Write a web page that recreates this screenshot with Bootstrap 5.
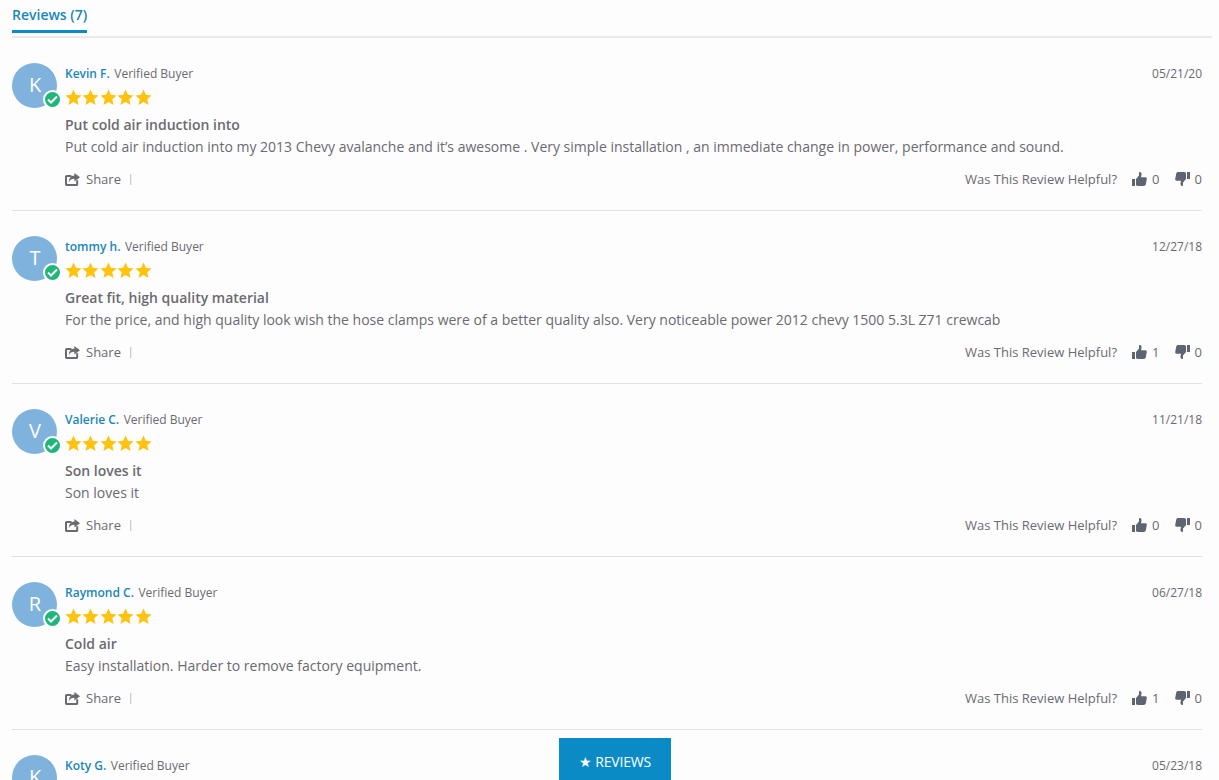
<!DOCTYPE html>
<html lang="en"><head><meta charset="utf-8"><title>Reviews</title>
<link href="https://cdn.jsdelivr.net/npm/bootstrap@5.3.0/dist/css/bootstrap.min.css" rel="stylesheet">
<style>
html,body{height:780px;overflow:hidden}
body{background:#fdfdfd;font-family:"Open Sans",sans-serif;color:#6a6a71;font-size:14px}
.rv-wrap{padding:0 17px 0 12px}
.rv-tabs{height:38px;border-bottom:2px solid #e9e9e9;margin-right:-10px}
.rv-tab{display:inline-block;height:33px;line-height:30px;font-size:14px;font-weight:600;color:#1a87b9;border-bottom:3px solid #0a8bc6}
.rv-item{height:173px;border-bottom:1px solid #e2e2e2;padding-top:25px}
.rv-avatar{width:45px;height:45px;border-radius:50%;background:#7fb2dc;color:#fff;font-size:20px;line-height:44px;text-align:center;position:relative;flex:none;margin-right:8px;padding-left:1px}
.rv-check{position:absolute;right:-5px;bottom:-1px;width:19px;height:19px;border-radius:50%;background:#1fb67b;border:2px solid #fff;display:flex;align-items:center;justify-content:center}
.rv-head{font-size:12px;line-height:22px;height:22px}
.rv-name{color:#1a87b9;font-weight:600;margin-right:4.5px}
.rv-date{font-size:12px;line-height:22px}
.rv-stars{height:26px;margin-top:-1px;display:flex;gap:.4px;align-items:center}
.rv-title{font-weight:600;font-size:14px;line-height:22px;margin-top:4px}
.rv-body{font-size:14px;line-height:22px}
.rv-foot{font-size:13px;line-height:20px;margin-top:11px}
.rv-share-ico{margin-right:6px}
.rv-sep{font-size:10px;margin-left:7px;position:relative;top:-1px;font-weight:300}
.rv-thumb{margin-left:15px}
.rv-thumb-down{transform:scale(-1,-1)}
.rv-count{width:7.5px;display:inline-block;margin-left:5px}
.rv-float{position:fixed;left:559px;bottom:0;width:112px;height:42px;background:#0a8bc6;color:#fff;font-size:14px;line-height:47px;text-align:center;letter-spacing:-.2px}
</style></head>
<body>
<svg width="0" height="0" class="d-block position-absolute">
<defs>
<path id="rv-star" d="M8.5.5l2.4 5.3 5.6.6-4.2 3.9 1.2 5.7-5-2.9-5 2.9 1.2-5.7L.5 6.4l5.6-.6z" fill="#fdc30f"/>
<path id="rv-up" d="M0 7h3v7H0zM4 7l3-3.5V0.6C7 .2 7.4 0 7.8 0 9 0 9.8 1.3 9.5 2.8L9 5.2h4.4c.9 0 1.6.8 1.4 1.7l-1 5.4c-.2 1-1 1.7-2 1.7H6.2c-.8 0-1.5-.3-2.2-.8z" fill="#5f6472"/>
<path id="rv-share" d="M13.2 7.2V11.2c0 1-.8 1.8-1.8 1.8H1.8C.8 13 0 12.2 0 11.2V3.8C0 2.8.8 2 1.8 2H6.4v2H2v7h9.2V7.2zM9.4 0L15 4.2 9.4 8.4V5.8C6.8 5.8 5 6.8 3.8 9.2c0-4 2.2-6.4 5.6-6.6z" fill="#6a6a71"/>
</defs></svg>
<div class="rv-wrap">
<div class="rv-tabs"><span class="rv-tab">Reviews (7)</span></div>

<div class="rv-item d-flex"><div class="rv-avatar">K<span class="rv-check"><svg width="11" height="9" viewBox="0 0 11 9"><path d="M1 4.5l3 3 6-6" fill="none" stroke="#fff" stroke-width="2"/></svg></span></div>
<div class="flex-grow-1">
<div class="d-flex justify-content-between"><div class="rv-head"><span class="rv-name">Kevin F.</span>Verified Buyer</div><div class="rv-date">05/21/20</div></div>
<div class="rv-stars"><svg width="17" height="17"><use href="#rv-star"/></svg><svg width="17" height="17"><use href="#rv-star"/></svg><svg width="17" height="17"><use href="#rv-star"/></svg><svg width="17" height="17"><use href="#rv-star"/></svg><svg width="17" height="17"><use href="#rv-star"/></svg></div>
<div class="rv-title">Put cold air induction into</div>
<div class="rv-body">Put cold air induction into my 2013 Chevy avalanche and it’s awesome . Very simple installation , an immediate change in power, performance and sound.</div>
<div class="rv-foot d-flex justify-content-between align-items-center"><div class="d-flex align-items-center"><svg width="15" height="13" class="rv-share-ico"><use href="#rv-share"/></svg>Share<span class="rv-sep">|</span></div><div class="d-flex align-items-center">Was This Review Helpful?<svg width="15" height="14" class="rv-thumb"><use href="#rv-up"/></svg><span class="rv-count">0</span><svg width="15" height="14" class="rv-thumb rv-thumb-down"><use href="#rv-up"/></svg><span class="rv-count">0</span></div></div>
</div></div>

<div class="rv-item d-flex"><div class="rv-avatar">T<span class="rv-check"><svg width="11" height="9" viewBox="0 0 11 9"><path d="M1 4.5l3 3 6-6" fill="none" stroke="#fff" stroke-width="2"/></svg></span></div>
<div class="flex-grow-1">
<div class="d-flex justify-content-between"><div class="rv-head"><span class="rv-name">tommy h.</span>Verified Buyer</div><div class="rv-date">12/27/18</div></div>
<div class="rv-stars"><svg width="17" height="17"><use href="#rv-star"/></svg><svg width="17" height="17"><use href="#rv-star"/></svg><svg width="17" height="17"><use href="#rv-star"/></svg><svg width="17" height="17"><use href="#rv-star"/></svg><svg width="17" height="17"><use href="#rv-star"/></svg></div>
<div class="rv-title">Great fit, high quality material</div>
<div class="rv-body">For the price, and high quality look wish the hose clamps were of a better quality also. Very noticeable power 2012 chevy 1500 5.3L Z71 crewcab</div>
<div class="rv-foot d-flex justify-content-between align-items-center"><div class="d-flex align-items-center"><svg width="15" height="13" class="rv-share-ico"><use href="#rv-share"/></svg>Share<span class="rv-sep">|</span></div><div class="d-flex align-items-center">Was This Review Helpful?<svg width="15" height="14" class="rv-thumb"><use href="#rv-up"/></svg><span class="rv-count">1</span><svg width="15" height="14" class="rv-thumb rv-thumb-down"><use href="#rv-up"/></svg><span class="rv-count">0</span></div></div>
</div></div>

<div class="rv-item d-flex"><div class="rv-avatar">V<span class="rv-check"><svg width="11" height="9" viewBox="0 0 11 9"><path d="M1 4.5l3 3 6-6" fill="none" stroke="#fff" stroke-width="2"/></svg></span></div>
<div class="flex-grow-1">
<div class="d-flex justify-content-between"><div class="rv-head"><span class="rv-name">Valerie C.</span>Verified Buyer</div><div class="rv-date">11/21/18</div></div>
<div class="rv-stars"><svg width="17" height="17"><use href="#rv-star"/></svg><svg width="17" height="17"><use href="#rv-star"/></svg><svg width="17" height="17"><use href="#rv-star"/></svg><svg width="17" height="17"><use href="#rv-star"/></svg><svg width="17" height="17"><use href="#rv-star"/></svg></div>
<div class="rv-title">Son loves it</div>
<div class="rv-body">Son loves it</div>
<div class="rv-foot d-flex justify-content-between align-items-center"><div class="d-flex align-items-center"><svg width="15" height="13" class="rv-share-ico"><use href="#rv-share"/></svg>Share<span class="rv-sep">|</span></div><div class="d-flex align-items-center">Was This Review Helpful?<svg width="15" height="14" class="rv-thumb"><use href="#rv-up"/></svg><span class="rv-count">0</span><svg width="15" height="14" class="rv-thumb rv-thumb-down"><use href="#rv-up"/></svg><span class="rv-count">0</span></div></div>
</div></div>

<div class="rv-item d-flex"><div class="rv-avatar">R<span class="rv-check"><svg width="11" height="9" viewBox="0 0 11 9"><path d="M1 4.5l3 3 6-6" fill="none" stroke="#fff" stroke-width="2"/></svg></span></div>
<div class="flex-grow-1">
<div class="d-flex justify-content-between"><div class="rv-head"><span class="rv-name">Raymond C.</span>Verified Buyer</div><div class="rv-date">06/27/18</div></div>
<div class="rv-stars"><svg width="17" height="17"><use href="#rv-star"/></svg><svg width="17" height="17"><use href="#rv-star"/></svg><svg width="17" height="17"><use href="#rv-star"/></svg><svg width="17" height="17"><use href="#rv-star"/></svg><svg width="17" height="17"><use href="#rv-star"/></svg></div>
<div class="rv-title">Cold air</div>
<div class="rv-body">Easy installation. Harder to remove factory equipment.</div>
<div class="rv-foot d-flex justify-content-between align-items-center"><div class="d-flex align-items-center"><svg width="15" height="13" class="rv-share-ico"><use href="#rv-share"/></svg>Share<span class="rv-sep">|</span></div><div class="d-flex align-items-center">Was This Review Helpful?<svg width="15" height="14" class="rv-thumb"><use href="#rv-up"/></svg><span class="rv-count">1</span><svg width="15" height="14" class="rv-thumb rv-thumb-down"><use href="#rv-up"/></svg><span class="rv-count">0</span></div></div>
</div></div>

<div class="rv-item d-flex"><div class="rv-avatar">K<span class="rv-check"><svg width="11" height="9" viewBox="0 0 11 9"><path d="M1 4.5l3 3 6-6" fill="none" stroke="#fff" stroke-width="2"/></svg></span></div>
<div class="flex-grow-1">
<div class="d-flex justify-content-between"><div class="rv-head"><span class="rv-name">Koty G.</span>Verified Buyer</div><div class="rv-date">05/23/18</div></div>
</div></div>
</div>
<div class="rv-float">★ REVIEWS</div>
<script src="https://cdn.jsdelivr.net/npm/bootstrap@5.3.0/dist/js/bootstrap.bundle.min.js"></script>
</body></html>
